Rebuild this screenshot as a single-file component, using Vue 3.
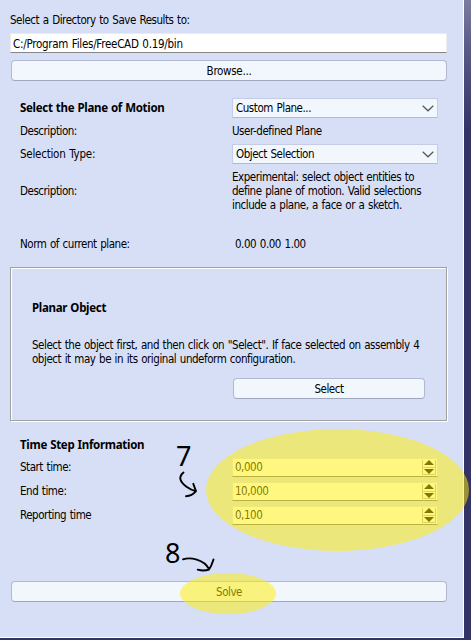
<script setup>
import { ref } from 'vue'

const directory = ref('C:/Program Files/FreeCAD 0.19/bin')
const steps = ref([
  { label: 'Start time:', value: '0,000' },
  { label: 'End time:', value: '10,000' },
  { label: 'Reporting time', value: '0,100' },
])
</script>

<template>
  <div class="window">
    <main class="panel">
      <div class="line dir-label"><span>Select a Directory to Save Results to:</span></div>
      <div class="line path-input"><span>{{ directory }}</span></div>
      <button class="btn browse"><span>Browse...</span></button>

      <section class="plane">
        <h2 class="row h20">Select the Plane of Motion</h2>
        <div class="combo">
          <span>Custom Plane...</span>
          <svg width="12" height="7" viewBox="0 0 12 7"><path d="M.7.7 6 5.8 11.3.7" /></svg>
        </div>
        <div class="row h26">Description:</div>
        <div class="row h26">User-defined Plane</div>
        <div class="row h20 type">Selection Type:</div>
        <div class="combo">
          <span>Object Selection</span>
          <svg width="12" height="7" viewBox="0 0 12 7"><path d="M.7.7 6 5.8 11.3.7" /></svg>
        </div>
        <div class="row h54">Description:</div>
        <div class="row h54"><p>Experimental: select object entities to<br />define plane of motion. Valid selections<br />include a plane, a face or a sketch.</p></div>
        <div class="row h52">Norm of current plane:</div>
        <div class="row h52 norm">0.00 0.00 1.00</div>
      </section>

      <section class="frame">
        <h2>Planar Object</h2>
        <p>Select the object first, and then click on "Select". If face selected on assembly 4<br />object it may be in its original undeform configuration.</p>
        <button class="btn select"><span>Select</span></button>
      </section>

      <section class="steps">
        <h2>Time Step Information</h2>
        <div v-for="s in steps" :key="s.label" class="step">
          <span class="step-label">{{ s.label }}</span>
          <div class="spin">
            <span>{{ s.value }}</span>
            <svg width="14" height="16" viewBox="0 0 14 16">
              <path class="edge" d="M.5 1V15.500H13.500V1M.5 8.500H13.500" />
              <path d="M2 6 7 1 12 6ZM2 10H12L7 15Z" />
            </svg>
          </div>
        </div>
      </section>

      <button class="btn solve"><span>Solve</span></button>
    </main>

    <div class="mark mark-times"></div>
    <div class="mark mark-solve"></div>
    <span class="num seven">7</span>
    <span class="num eight">8</span>
    <svg class="arrows" width="471" height="640" viewBox="0 0 471 640">
      <path d="M183.500 472.500C178 477 180 482 186.500 486.800Q191 490 195.500 491.200M193.300 483.800 196 491.200Q192 496 186 496.300" />
      <path d="M183 559.300C190 557 204 559 209 569M213.500 559.500Q211.500 566 209 569.500Q204 571.500 197.700 569.700" />
    </svg>
  </div>
</template>

<style>
body { margin: 0; overflow: hidden; }
</style>

<style scoped>
.window {
  position: relative;
  box-sizing: border-box;
  width: 471px;
  height: 640px;
  overflow: hidden;
  background: linear-gradient(#7c7ca0 0, #5c5c88 45px, #333366 130px);
  font: 11.5px/14px "DejaVu Sans Condensed", "DejaVu Sans", sans-serif;
  font-stretch: condensed;
  letter-spacing: -0.46px;
  word-spacing: 0.75px;
  color: #000;
}
.panel {
  box-sizing: border-box;
  display: flex;
  flex-direction: column;
  width: 464px;
  height: 638px;
  padding: 13px 16px 0 10px;
  border-right: 1px solid #fff;
  border-bottom: 1px solid #fff;
  background: #d7dff7;
  white-space: nowrap;
}
h2, p { margin: 0; font-size: inherit; }
h2 { font-weight: 700; font-family: "Noto Sans", sans-serif; font-stretch: normal; letter-spacing: -0.3px; word-spacing: 0.5px; }
.line { display: flex; align-items: center; }
.dir-label { height: 14px; margin-bottom: 6px; }
.path-input {
  box-sizing: border-box;
  height: 20px;
  padding: 2px 0 0 2px;
  border: 1px solid #ececec;
  border-bottom-color: #868686;
  background: #fff;
  letter-spacing: -0.27px;
}
.btn {
  box-sizing: border-box;
  display: flex;
  align-items: center;
  justify-content: center;
  height: 21px;
  padding: 1px 0 0;
  border: 1px solid #b1b8cf;
  border-bottom-color: #9fa7bf;
  border-radius: 4px;
  background: #f2f6fd;
  color: inherit;
  font: inherit;
  letter-spacing: inherit;
}
.browse { margin: 7px 0 0 1px; letter-spacing: -0.3px; }
.plane {
  display: grid;
  grid-template-columns: 212px 206px;
  margin: 17px 0 0 10px;
}
.row { display: flex; align-items: center; }
.h20 { height: 20px; }
.h26 { height: 26px; }
.h54 { height: 54px; }
.h52 { height: 52px; }
.type { letter-spacing: -0.24px; }
.norm { padding-left: 3px; }
.combo {
  box-sizing: border-box;
  display: flex;
  align-items: center;
  justify-content: space-between;
  height: 20px;
  padding: 0 3px;
  border: 1px solid #c4cce6;
  border-bottom-color: #b3bad0;
  border-radius: 1px;
  background: #f2f6fd;
}
.combo path { fill: none; stroke: #555; stroke-width: 1.2; }
.frame {
  box-sizing: border-box;
  width: 437px;
  height: 154px;
  margin-top: -3px;
  padding: 33px 21px 0 21px;
  border: 1px solid #a0a0a0;
  box-shadow: inset 1px 1px #fff, 1px 1px #fff;
}
.frame p { margin-top: 23px; }
.select { width: 192px; margin: 12px 0 0 auto; }
.steps { padding: 17px 0 0 10px; }
.steps h2 { margin-bottom: 3px; }
.step { display: flex; align-items: center; height: 24px; }
.step-label { width: 212px; }
.spin {
  box-sizing: border-box;
  display: flex;
  align-items: center;
  justify-content: space-between;
  width: 206px;
  height: 19px;
  padding: 0 1px 0 2px;
  border: 1px solid #dfe3ee;
  border-bottom-color: #777;
  background: #fff;
}
.spin .edge { fill: none; stroke: #b9b9b9; }
.solve { margin: 54px 0 0 1px; }
.mark {
  position: absolute;
  border-radius: 50%;
  background: rgba(255, 240, 0, 0.5);
}
.mark-times { left: 206px; top: 429px; width: 263px; height: 122px; }
.mark-solve { left: 180px; top: 573px; width: 96px; height: 41px; }
.num {
  position: absolute;
  font: 27px/30px "Noto Sans", sans-serif;
  letter-spacing: 0;
}
.seven { left: 176px; top: 441px; }
.eight { left: 165px; top: 538px; }
.arrows { position: absolute; left: 0; top: 0; fill: none; stroke: #000; stroke-width: 1.9; stroke-linecap: round; stroke-linejoin: round; }
</style>
